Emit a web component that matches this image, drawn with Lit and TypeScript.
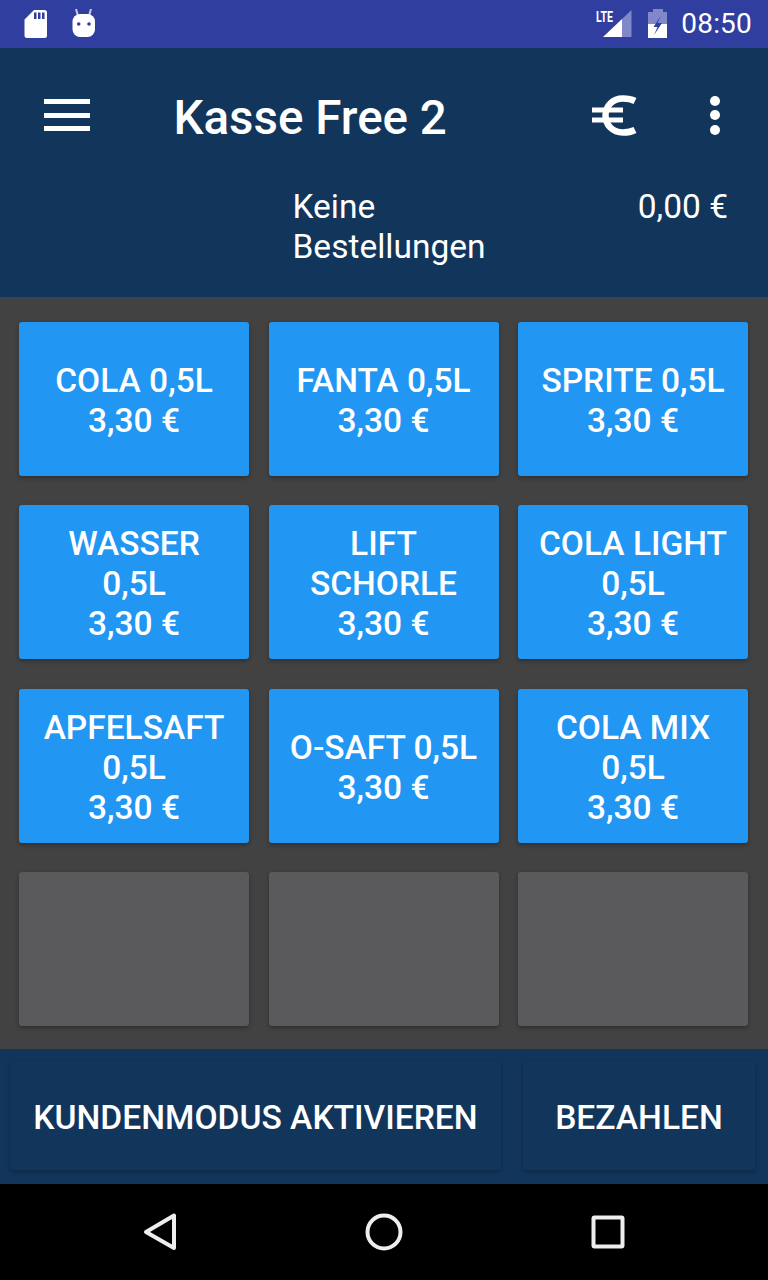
import { LitElement, html, css, svg } from "lit";
import { customElement } from "lit/decorators.js";

const PRODUCTS = [
  ["COLA 0,5L"],
  ["FANTA 0,5L"],
  ["SPRITE 0,5L"],
  ["WASSER", "0,5L"],
  ["LIFT", "SCHORLE"],
  ["COLA LIGHT", "0,5L"],
  ["APFELSAFT", "0,5L"],
  ["O-SAFT 0,5L"],
  ["COLA MIX", "0,5L"],
];

@customElement("app-root")
export class AppRoot extends LitElement {
  static styles = css`
    :host {
      display: block;
      width: 768px;
      height: 1280px;
      overflow: hidden;
      font-family: Roboto, "Liberation Sans", sans-serif;
      color: #fff;
      background: #424242;
    }
    .page {
      display: flex;
      flex-direction: column;
      height: 1280px;
    }
    .status {
      height: 48px;
      flex: none;
      background: #303f9f;
      display: flex;
      align-items: center;
      justify-content: space-between;
      padding: 0 16px 0 24px;
    }
    .status-left,
    .status-right {
      display: flex;
      align-items: center;
    }
    .status-left {
      gap: 24px;
    }
    .clock {
      font-size: 28px;
      line-height: 48px;
      margin-left: 14px;
      letter-spacing: 0.2px;
      font-weight: 400;
    }
    .battery {
      margin-left: 16px;
    }
    .header {
      height: 249px;
      flex: none;
      background: #12355b;
      box-sizing: border-box;
      display: flex;
      flex-direction: column;
    }
    .toolbar {
      height: 137px;
      flex: none;
      display: flex;
      align-items: center;
      padding-left: 44px;
    }
    .menu {
      width: 46px;
      height: 32px;
      display: flex;
      flex-direction: column;
      justify-content: space-between;
      margin-top: -3px;
    }
    .menu span {
      height: 5px;
      background: #fff;
    }
    .title {
      font-size: 47.500px;
      font-weight: 500;
      line-height: 60px;
      margin-left: 83.500px;
      width: 418.500px;
      white-space: nowrap;
      padding-top: 2px;
    }
    .euro {
      width: 46px;
      height: 46px;
      margin-top: -3px;
    }
    .dots {
      display: flex;
      flex-direction: column;
      gap: 4.500px;
      margin-left: 72px;
      margin-top: -3px;
    }
    .dots span {
      width: 10px;
      height: 10px;
      border-radius: 50%;
      background: #fff;
    }
    .summary {
      display: flex;
      justify-content: space-between;
      padding: 2px 40px 0 292.500px;
      font-size: 33.500px;
      line-height: 40px;
    }
    .summary .orders {
      width: 210px;
    }
    .grid {
      flex: 1;
      display: grid;
      grid-template-columns: repeat(3, 230px);
      grid-auto-rows: 154px;
      column-gap: 19.500px;
      row-gap: 29.330px;
      padding: 25px 0 0 19px;
      background: #424242;
    }
    .card {
      border-radius: 3px;
      display: flex;
      flex-direction: column;
      align-items: center;
      justify-content: center;
      text-align: center;
      font-size: 33.500px;
      font-weight: 500;
      line-height: 40px;
      box-shadow: 0 2px 4px rgba(0, 0, 0, 0.3);
      padding-top: 4px;
      box-sizing: border-box;
      white-space: nowrap;
    }
    .product {
      background: #2196f3;
    }
    .empty {
      background: #5a5a5c;
    }
    .actions {
      height: 135px;
      flex: none;
      background: #12355b;
      display: flex;
      box-sizing: border-box;
      padding: 12px 13px 14px 10px;
      gap: 22px;
    }
    .action {
      display: flex;
      align-items: center;
      justify-content: center;
      font-size: 33.600px;
      font-weight: 500;
      line-height: 40px;
      border-radius: 3px;
      box-shadow: 0 2px 4px rgba(0, 0, 0, 0.25);
      white-space: nowrap;
      padding-top: 5px;
      box-sizing: border-box;
    }
    .action.mode {
      width: 491px;
    }
    .action.pay {
      flex: 1;
    }
    .nav {
      height: 96px;
      flex: none;
      background: #000;
      display: block;
    }
    svg {
      display: block;
    }
  `;

  private sdIcon() {
    return html`<svg width="24" height="30" viewBox="0 0 24 30">
      <path
        fill="#fff"
        d="M10 1H20.500a2.500 2.500 0 0 1 2.500 2.500V26.500a2.500 2.500 0 0 1-2.500 2.500H3a2.500 2.500 0 0 1-2.500-2.500V10.500z"
      />
      <path fill="#303f9f" d="M10 3.500h2.500v6.500h-2.500zM14 3.500h2.500v6.500h-2.500zM18 3.500h2.500v6.500h-2.500z" />
    </svg>`;
  }

  private robotIcon() {
    return html`<svg width="24" height="30" viewBox="0 0 24 30">
      <path stroke="#c5cae9" stroke-width="2" fill="none" d="M4 0l2 7M19 0l-2 7" />
      <rect x="0.500" y="5" width="22.500" height="23" rx="7.500" fill="#fff" />
      <circle cx="6.700" cy="15" r="1.800" fill="#303f9f" />
      <circle cx="17" cy="15" r="1.800" fill="#303f9f" />
    </svg>`;
  }

  private signalIcon() {
    return html`<svg width="36" height="30" viewBox="0 0 36 30">
      <text x="0" y="13" font-size="15" font-weight="700" fill="#fff" font-family="Roboto, sans-serif" textLength="17" lengthAdjust="spacingAndGlyphs">LTE</text>
      <path fill="#8088c9" d="M26 28V10L35.500 1V28z" />
      <path fill="#fff" d="M7 28L26 10V28z" />
    </svg>`;
  }

  private batteryIcon() {
    return html`<svg class="battery" width="19" height="30" viewBox="0 0 19 30">
      <path fill="#8088c9" d="M5 0h10v3h4v13H0V3h5z" />
      <path fill="#fff" d="M0 15h19v14H0z" />
      <path fill="#303f9f" d="M12.500 7L5.500 18h4L6 26l8-12h-4.500z" />
    </svg>`;
  }

  private euroIcon() {
    return svg`<path fill="none" stroke="#fff" stroke-width="6.500" d="M43 9C39 7 35 6.500 31 6.500C20.500 6.500 13.500 14 13.500 23.500S20.500 40.500 31 40.500C35 40.500 39 40 43 38" />
      <path fill="none" stroke="#fff" stroke-width="5" d="M0 18H31M0 28H31" />`;
  }

  render() {
    return html`
      <div class="page">
        <div class="status">
          <div class="status-left">${this.sdIcon()} ${this.robotIcon()}</div>
          <div class="status-right">
            ${this.signalIcon()} ${this.batteryIcon()}
            <span class="clock">08:50</span>
          </div>
        </div>
        <div class="header">
          <div class="toolbar">
            <div class="menu"><span></span><span></span><span></span></div>
            <div class="title">Kasse Free 2</div>
            <svg class="euro" viewBox="0 0 46 46">${this.euroIcon()}</svg>
            <div class="dots"><span></span><span></span><span></span></div>
          </div>
          <div class="summary">
            <div class="orders">Keine Bestellungen</div>
            <div>0,00 €</div>
          </div>
        </div>
        <div class="grid">
          ${PRODUCTS.map(
            (p) => html`<div class="card product">
              ${p.map((line) => html`<div>${line}</div>`)}
              <div>3,30 €</div>
            </div>`
          )}
          <div class="card empty"></div>
          <div class="card empty"></div>
          <div class="card empty"></div>
        </div>
        <div class="actions">
          <div class="action mode">KUNDENMODUS AKTIVIEREN</div>
          <div class="action pay">BEZAHLEN</div>
        </div>
        <svg class="nav" width="768" height="96" viewBox="0 0 768 96">
          <path fill="none" stroke="#eee" stroke-width="4" stroke-linejoin="round" d="M174 31.500V64L146 48z" />
          <circle cx="384" cy="48" r="16.500" fill="none" stroke="#eee" stroke-width="4" />
          <rect x="593.500" y="33.500" width="29" height="29" rx="1" fill="none" stroke="#eee" stroke-width="4" />
        </svg>
      </div>
    `;
  }
}
